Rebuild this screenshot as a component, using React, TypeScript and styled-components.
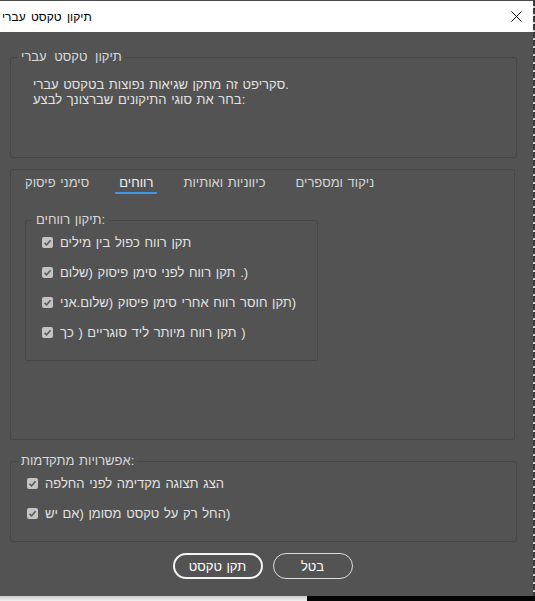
import React from 'react'
import styled, { createGlobalStyle } from 'styled-components'

const GlobalS = createGlobalStyle`
    html, body {
        margin: 0;
        padding: 0;
        background-color: #e6e6e6;
    }
    body {
        font-family: "Liberation Sans", "DejaVu Sans", sans-serif;
        font-size: 13px;
        word-spacing: 1px;
    }
`

const PageS = styled.div`
    width: 535px;
    height: 601px;
    display: flex;
    flex-direction: column;
    overflow: hidden;
`

const TopRowS = styled.div`
    display: flex;
    height: 596px;
`

const EdgeS = styled.div`
    width: 2px;
    background: repeating-linear-gradient(
        to bottom,
        #3a3a3a 0px,
        #3a3a3a 6px,
        #d0d0d0 6px,
        #d0d0d0 8px
    );
`

const BottomStripS = styled.div`
    display: flex;
    height: 5px;
`

const BottomLightS = styled.div`
    width: 307px;
    background: linear-gradient(to bottom, #c9c9c9, #f2f2f2);
`

const BottomDarkS = styled.div`
    flex: 1;
    background-color: #050505;
`

const DialogS = styled.div`
    width: 533px;
    height: 596px;
    display: flex;
    flex-direction: column;
    background-color: #535353;
    box-sizing: border-box;
`

const TitleBarS = styled.div`
    height: 32px;
    box-sizing: border-box;
    border-top: 1px solid #4a4a4a;
    background-color: #ffffff;
    display: flex;
    align-items: center;
    justify-content: space-between;
    padding: 0 11px 0 2px;
`

const TitleTxtS = styled.span`
    color: #000;
    font-size: 12px;
    word-spacing: 2px;
`

const CloseBtnS = styled.button`
    width: 12px;
    height: 12px;
    padding: 0;
    border: none;
    background: transparent;
    display: flex;
    align-items: center;
    justify-content: center;
`

const BodyS = styled.div`
    display: flex;
    flex-direction: column;
    padding-left: 10px;
`

const PanelS = styled.fieldset<{ w: number, h: number, mt: number }>`
    box-sizing: border-box;
    width: ${ ({ w }) => w }px;
    height: ${ ({ h }) => h }px;
    margin: ${ ({ mt }) => mt }px 0 0 0;
    padding: 0;
    min-width: 0;
    border: 1px solid #464646;
    border-radius: 2px;
`

const LegendS = styled.legend<{ spread?: boolean }>`
    margin-left: 7px;
    padding: 0 3px;
    line-height: 14px;
    color: #d8d8d8;
    word-spacing: ${ ({ spread }) => spread ? '4px' : '1px' };
`

const DescS = styled.div`
    padding: 13px 0 0 22px;
    color: #e2e2e2;
    line-height: 15px;
`

const TabsS = styled.div`
    display: flex;
    gap: 22px;
    padding-left: 10px;
`

const TabS = styled.div<{ active?: boolean }>`
    padding: 6px 4px 2px 4px;
    line-height: 14px;
    color: ${ ({ active }) => active ? '#f2f2f2' : '#d6d6d6' };
    border-bottom: 2px solid ${ ({ active }) => active ? '#3f95e6' : 'transparent' };
`

const InnerPanelS = styled(PanelS)`
    margin-left: 14px;
`

const RowsS = styled.div`
    display: flex;
    flex-direction: column;
    padding-left: 16px;
`

const RowS = styled.label`
    height: 30px;
    display: flex;
    align-items: center;
    gap: 7px;
    color: #e2e2e2;
`

// the dialog lays hebrew out in an ltr line, trailing brackets stay on the right
const RtlS = styled.span`
    direction: rtl;
    unicode-bidi: isolate;
`

const BoxS = styled.span`
    width: 11px;
    height: 11px;
    border-radius: 2px;
    background-color: #c4c4c4;
    display: flex;
    align-items: center;
    justify-content: center;
    flex-shrink: 0;
`

const ButtonsS = styled.div`
    display: flex;
    justify-content: center;
    gap: 10px;
    margin-top: 11px;
    padding-right: 8px;
`

const BtnS = styled.button<{ primary?: boolean, w: number }>`
    box-sizing: border-box;
    width: ${ ({ w }) => w }px;
    height: 26px;
    border-radius: 13px;
    background: transparent;
    color: #ffffff;
    font-family: "Liberation Sans", "DejaVu Sans", sans-serif;
    font-size: 13px;
    word-spacing: 1px;
    padding: 0;
    border: ${ ({ primary }) => primary ? '2px solid #f4f4f4' : '1px solid #dcdcdc' };
`

const Check: React.FC<{ label: string, tail?: string }> = ({ label, tail }) => (
    <RowS>
        <BoxS>
            <svg width="9" height="9" viewBox="0 0 9 9">
                <polyline points="1.5,4.8 3.6,6.8 7.6,2.2" fill="none" stroke="#5c5c5c" strokeWidth="1.6" />
            </svg>
        </BoxS>
        <span>
            <RtlS>{ label }</RtlS>{ tail }
        </span>
    </RowS>
)

const tabs = [ 'סימני פיסוק', 'רווחים', 'כיווניות ואותיות', 'ניקוד ומספרים' ]

const spaceFixes = [
    { label: 'תקן רווח כפול בין מילים' },
    { label: 'תקן רווח לפני סימן פיסוק (שלום', tail: ' .)' },
    { label: 'תקן חוסר רווח אחרי סימן פיסוק (שלום.אני', tail: ')' },
    { label: 'תקן רווח מיותר ליד סוגריים ( כך', tail: ' )' }
]

const App: React.FC = () => {
    return (
        <>
            <GlobalS />
            <PageS>
                <TopRowS>
                    <DialogS>
                        <TitleBarS>
                            <TitleTxtS>תיקון טקסט עברי</TitleTxtS>
                            <CloseBtnS>
                                <svg width="11" height="11" viewBox="0 0 11 11">
                                    <path d="M0.5 0.5 L10.5 10.5 M10.5 0.5 L0.5 10.5" stroke="#000" strokeWidth="1" />
                                </svg>
                            </CloseBtnS>
                        </TitleBarS>
                        <BodyS>
                            <PanelS w={ 507 } h={ 108 } mt={ 18 }>
                                <LegendS spread>תיקון טקסט עברי</LegendS>
                                <DescS>
                                    <div>סקריפט זה מתקן שגיאות נפוצות בטקסט עברי.</div>
                                    <div>בחר את סוגי התיקונים שברצונך לבצע:</div>
                                </DescS>
                            </PanelS>
                            <PanelS w={ 505 } h={ 271 } mt={ 11 }>
                                <TabsS>
                                    { tabs.map(t =>
                                        <TabS key={ t } active={ t === 'רווחים' }>{ t }</TabS>
                                    ) }
                                </TabsS>
                                <InnerPanelS w={ 293 } h={ 148 } mt={ 19 }>
                                    <LegendS>תיקון רווחים:</LegendS>
                                    <RowsS>
                                        { spaceFixes.map(s => <Check key={ s.label } label={ s.label } tail={ s.tail } />) }
                                    </RowsS>
                                </InnerPanelS>
                            </PanelS>
                            <PanelS w={ 507 } h={ 88 } mt={ 14 }>
                                <LegendS>אפשרויות מתקדמות:</LegendS>
                                <RowsS>
                                    <Check label="הצג תצוגה מקדימה לפני החלפה" />
                                    <Check label="החל רק על טקסט מסומן (אם יש" tail=")" />
                                </RowsS>
                            </PanelS>
                        </BodyS>
                        <ButtonsS>
                            <BtnS primary w={ 90 }>תקן טקסט</BtnS>
                            <BtnS w={ 80 }>בטל</BtnS>
                        </ButtonsS>
                    </DialogS>
                    <EdgeS />
                </TopRowS>
                <BottomStripS>
                    <BottomLightS />
                    <BottomDarkS />
                </BottomStripS>
            </PageS>
        </>
    )
}

export default App
